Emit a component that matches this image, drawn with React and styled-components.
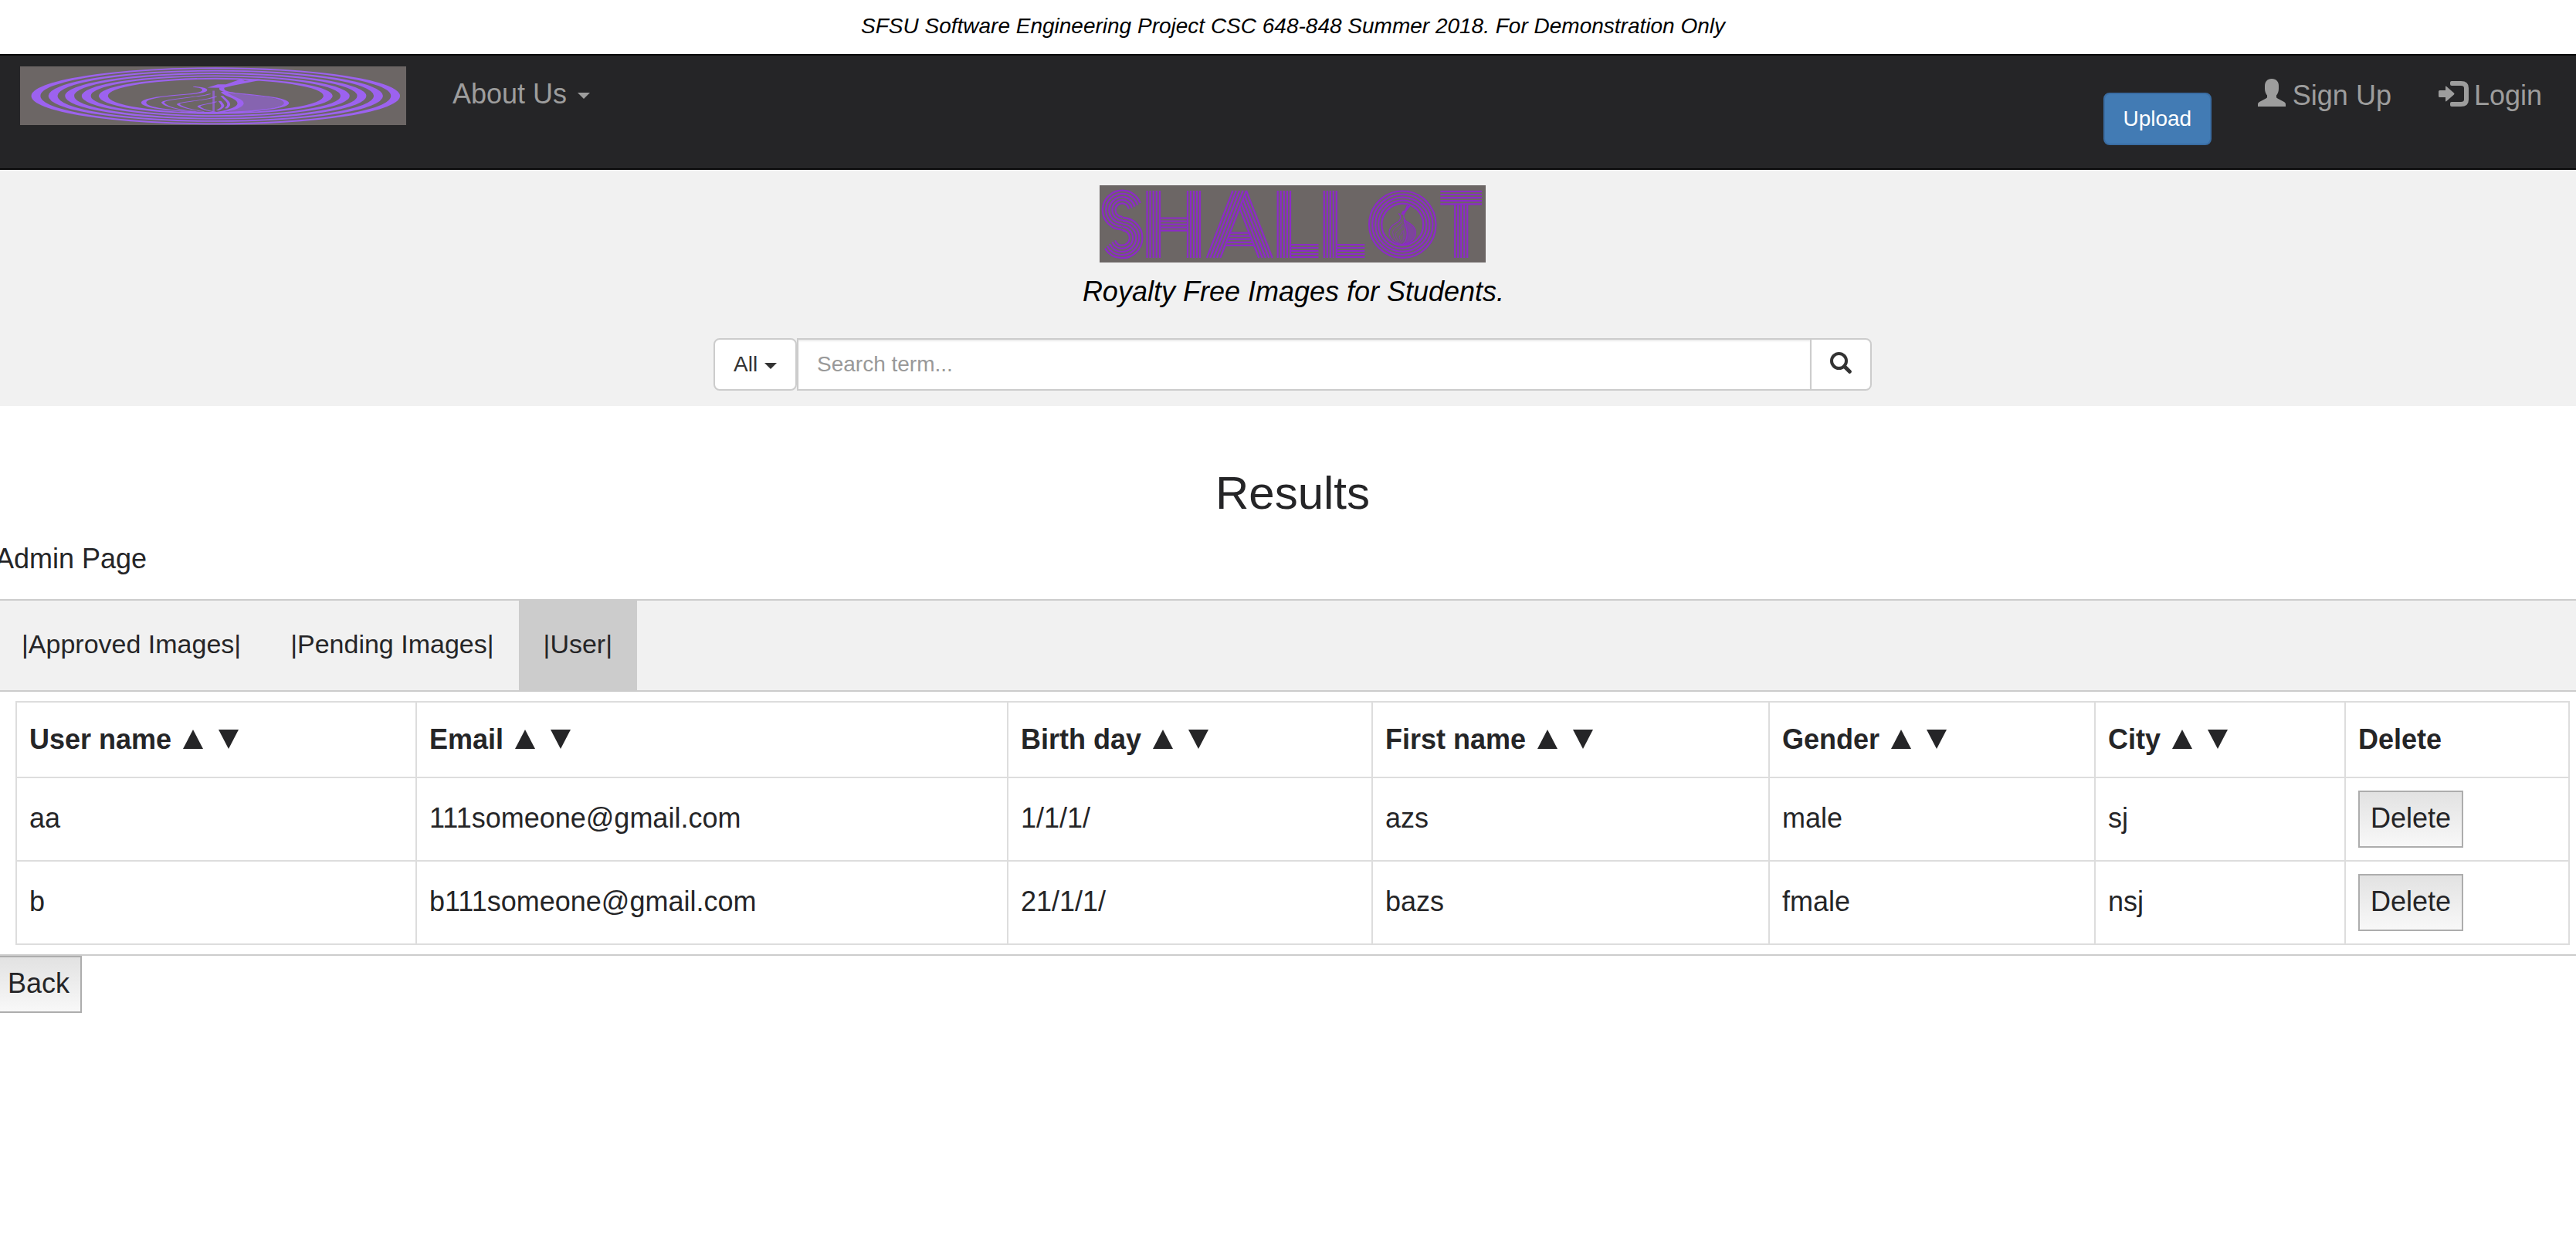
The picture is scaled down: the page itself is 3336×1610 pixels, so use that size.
import React from 'react';
import styled, { createGlobalStyle } from 'styled-components';

const GlobalStyle = createGlobalStyle`
  *, *::before, *::after { box-sizing: border-box; }
  html, body { margin: 0; padding: 0; }
  body {
    background: #fff;
    color: #252527;
    font-family: "Liberation Sans", Arial, Helvetica, sans-serif;
    font-size: 36px;
    overflow: hidden;
  }
`;

const Page = styled.div`
  width: 3336px;
  height: 1610px;
  overflow: hidden;
`;

const Canvas = styled.div`
  width: 3348px;
`;

const Notice = styled.div`
  height: 70px;
  line-height: 68px;
  padding-left: 1px;
  font-size: 28px;
  font-style: italic;
  text-align: center;
  color: #000;
`;

/* Navigation */
const Navbar = styled.nav`
  display: flex;
  align-items: flex-start;
  width: 3336px;
  height: 150px;
  padding: 14px 44px 0 26px;
  background: #252527;
  border: solid #070708;
  border-width: 2px 0;
  color: #9d9d9d;
`;

const Artwork = styled.svg`
  display: block;
  flex: none;
  background: #6c6665;
`;

const NavLink = styled.a`
  display: flex;
  align-items: center;
  height: 40px;
  line-height: 40px;
  margin-top: ${(p) => p.$top}px;
  margin-left: ${(p) => p.$left}px;
  white-space: pre;
`;

const Caret = styled.span`
  border: 8px solid transparent;
  border-top-color: currentColor;
  border-bottom: 0;
  margin-left: ${(p) => p.$gap}px;
  margin-top: 4px;
`;

const UploadButton = styled.button`
  width: 140px;
  height: 68px;
  margin: 34px 0 0 auto;
  padding: 0;
  border: 2px solid #3a6da3;
  border-radius: 8px;
  background: #427bb4;
  color: #fff;
  font: 28px "Liberation Sans", Arial, sans-serif;
`;

const NavIcon = styled.svg`
  display: block;
  flex: none;
  margin-right: ${(p) => p.$gap}px;
  margin-bottom: ${(p) => p.$lift}px;
`;

/* Hero */
const Hero = styled.header`
  display: flex;
  flex-direction: column;
  align-items: center;
  height: 306px;
  padding-top: 20px;
  background: #f1f1f1;
`;

const Tagline = styled.p`
  margin: 12px 0 35px;
  padding-left: 2px;
  height: 51px;
  line-height: 51px;
  font-style: italic;
  color: #000;
`;

const SearchGroup = styled.div`
  display: flex;
  width: 1500px;
  height: 68px;
  font-size: 28px;
  color: #333;
`;

const ScopeButton = styled.button`
  display: flex;
  align-items: center;
  width: 108px;
  padding: 0 0 0 24px;
  border: 2px solid #ccc;
  border-radius: 8px;
  background: #fff;
  color: inherit;
  font: 28px "Liberation Sans", Arial, sans-serif;
`;

const SearchInput = styled.input`
  flex: 1;
  min-width: 0;
  margin: 0;
  padding: 0 24px;
  border: 2px solid #ccc;
  border-radius: 0;
  background: #fff;
  box-shadow: inset 0 2px 2px rgba(0, 0, 0, 0.075);
  font: 28px "Liberation Sans", Arial, sans-serif;
  &::placeholder { color: #999; opacity: 1; }
`;

const SearchButton = styled.button`
  display: flex;
  align-items: center;
  justify-content: center;
  width: 78px;
  padding: 0 0 4px;
  border: 2px solid #ccc;
  border-left: 0;
  border-radius: 0 8px 8px 0;
  background: #fff;
`;

/* Results */
const Title = styled.h2`
  margin: 80px 0 26px;
  font-size: 60px;
  line-height: 66px;
  font-weight: 400;
  text-align: center;
`;

const Admin = styled.main`
  width: 3360px;
  margin-left: -6px;
`;

const AdminLabel = styled.div`
  height: 52px;
  line-height: 52px;
  margin-bottom: 26px;
`;

const TabBar = styled.div`
  display: flex;
  height: 120px;
  border: 2px solid #ccc;
  background: #f1f1f1;
`;

const Tab = styled.button`
  padding: 0 32px 3px;
  border: 0;
  background: ${(p) => (p.$active ? '#ccc' : 'transparent')};
  color: #252527;
  font: 34px "Liberation Sans", Arial, sans-serif;
  white-space: nowrap;
`;

const TabPanel = styled.section`
  padding: 12px 24px;
  border: 2px solid #ccc;
  border-top: 0;
`;

const Table = styled.table`
  width: 3308px;
  table-layout: fixed;
  border-collapse: collapse;
`;

const cell = `
  padding: 0 0 0 16px;
  border: 2px solid #ddd;
  text-align: left;
  vertical-align: middle;
  line-height: 52px;
  white-space: nowrap;
`;

const HeadCell = styled.th`
  ${cell}
  height: 98px;
  width: ${(p) => p.$width}px;
`;

const Cell = styled.td`
  ${cell}
  height: 108px;
`;

const CellText = styled.div`
  height: 54px;
`;

const SortArrow = styled.svg`
  margin: 0 5px 0 ${(p) => p.$left}px;
  vertical-align: baseline;
`;

const PlainButton = styled.button`
  display: block;
  height: 74px;
  padding: 0 14px 2px;
  border: 2px solid #adadad;
  border-radius: 0;
  background: linear-gradient(#e2e2e2, #f8f8f8);
  color: #252527;
  font: 36px "Liberation Sans", Arial, sans-serif;
`;

/* Five ruled stripes shared by every stroke of the brand artwork */
const RINGS = [43.2, 39.1, 35.1, 31.1, 27];

const OnionMark = () => (
  <g fill="none" stroke="currentColor" strokeLinecap="round">
    {RINGS.map((r) => <circle key={r} r={r} strokeWidth="2.2" />)}
    <path strokeWidth="1.2" d="M-4.8-14C-3-13-2.6-11-2.6-9C-2.8-5-5-3.5-8-2C-14 1-17.3 5-17.3 10C-17.3 17-12 24 0 25.8" />
    <path strokeWidth="1.2" d="M1.5-13C1.2-9 2-6.5 4.5-4.5C9-1.5 17 2 17 11C17 18 11 24.5 0 25.8" />
    <path fill="currentColor" stroke="none" fillOpacity=".55" d="M2.5-7C4 -4 16.5 1 16.5 11C16 19 9 25 2 26C5 21 7 14 5.8 8C5 2 2.5-1 2.5-7Z" />
    <path strokeWidth="1.5" d="M2-6C2.5 0 6 4 6 11C6 17 4 22 1 25" />
    <path strokeWidth=".7" d="M-1.5-3C-4 2-13 5-12.7 10.5C-12 17-9 21-5 24" />
    <path strokeWidth=".7" d="M0 1C-2 7-9 9-9 13C-8 18-6 21-3 24" />
    <path strokeWidth=".7" d="M0 9C-1 12-4.5 14-4 17C-3 21-2 23 0 25" />
    <path strokeWidth=".7" d="M1.5 0C2.5 7 4 12 2.5 19M1 8C1.5 13 2.5 16 .5 22" />
    <path strokeWidth=".5" strokeOpacity=".7" d="M-.5-8V24" />
    <path fill="currentColor" stroke="none" d="M-2-13L.5-18L2.500-18L6-26L7-23.500L10-26L11.500-25.500L4-16L2-12.500Z" />
    <path fill="currentColor" stroke="none" d="M-9 23.5C-4 26 5 26 11 22.5C6 29-5 29-9 23.5Z" />
  </g>
);

const SLOPE = 0.387;
const S_STRIPES = [[8.7, 26.2], [12.8, 22.1], [16.9, 18], [21.1, 13.9], [25.3, 9.7]];

const columns = (xs, y1, y2) => xs.map((x) => <line key={`c${x}`} x1={x} x2={x} y1={y1} y2={y2} />);
const rules = (ys, x1, x2) => ys.map((y) => <line key={`r${y}`} x1={x1} x2={x2} y1={y} y2={y} />);

const BrandBanner = () => (
  <Artwork width="500" height="100" viewBox="0 0 500 100" color="#8c2ac8" role="img" aria-label="Shallot">
    <g fill="none" stroke="currentColor" strokeWidth="2.2">
      {S_STRIPES.map(([upper, lower], i) => (
        <React.Fragment key={upper}>
          <circle cx="29.2" cy="32" r={upper} pathLength="360" strokeDasharray={`${259 - i * 3} 360`} transform="rotate(92 29.2 32)" />
          <circle cx="29.2" cy="68" r={lower} pathLength="360" strokeDasharray={`${236 + i * 3} 360`} transform="rotate(-88 29.2 68)" />
          <line x1={28.7} y1={32 + upper} x2={29.7} y2={68 - lower} />
        </React.Fragment>
      ))}
      {columns([61.5, 65.5, 69.7, 73.8, 78], 7, 94)}
      {columns([114, 118, 122, 126, 130], 7, 94)}
      {rules([42.5, 46.5, 50.6, 54.7, 58.7], 78, 114)}
      {[138.9, 143.2, 147.6, 152, 156.3].map((x) => (
        <line key={x} x1={x} y1="94" x2={x + 87 * SLOPE} y2="7" />
      ))}
      {[206.3, 210.7, 215, 219.3, 223.7].map((x) => {
        const y = 94 - (x - 156.3) / (2 * SLOPE);
        return <line key={x} x1={x} y1="94" x2={x - SLOPE * (94 - y)} y2={y} />;
      })}
      {[61.7, 65.7, 69.7, 73.8, 77.8].map((y) => (
        <line key={y} x1={156.3 + SLOPE * (94 - y)} x2={206.3 - SLOPE * (94 - y)} y1={y} y2={y} />
      ))}
      {columns([230.7, 234.7, 238.8, 242.9, 247], 7, 94)}
      {rules([77, 81, 85, 89, 93], 247, 283.5)}
      {columns([290.8, 294.8, 298.8, 302.8, 306.8], 7, 94)}
      {rules([77.01, 81.01, 85.01, 89.01, 93.01], 306.8, 343.3)}
      {rules([8, 12, 16.1, 20.2, 24.3], 441.3, 495)}
      {columns([460.2, 464.2, 468.2, 472.2, 476.2], 24, 94)}
    </g>
    <g transform="translate(392.3 50.7)"><OnionMark /></g>
  </Artwork>
);

const NavLogo = () => (
  <Artwork width="500" height="76" viewBox="0 0 500 76" color="#9c62ef" role="img" aria-label="Shallot home">
    <g transform="translate(253.3 38.3) scale(5.39 .835)"><OnionMark /></g>
  </Artwork>
);

const UserIcon = () => (
  <NavIcon width="36" height="36" viewBox="0 0 36 36" fill="currentColor" $gap={9} $lift={8}>
    <path d="M18 0C12 0 9 4 9 9v4c0 4 1.5 6.500 3 8.500v2c0 1-.5 1.500-1.500 2L2 30C.5 31 0 31.800 0 33v3h36v-3c0-1.200-.5-2-2-3l-8.500-4.500c-1-.5-1.500-1-1.500-2v-2c1.500-2 3-4.500 3-8.500V9c0-5-3-9-9-9z" />
  </NavIcon>
);

const LoginIcon = () => (
  <NavIcon width="39" height="33" viewBox="0 0 39 33" $gap={7} $lift={5}>
    <path d="M1.500 12H9V7.500Q9 6 10.300 7L20 15.500Q21 16.500 20 17.500L10.300 26Q9 27 9 25.500V21H1.500Q0 21 0 19.500V13.500Q0 12 1.500 12z" fill="currentColor" />
    <path d="M17 3H29Q36 3 36 9V24Q36 30 29 30H17" fill="none" stroke="currentColor" strokeWidth="6" />
    <path d="M17 0Q15 0 15 2V4Q15 6 17 6zM17 27Q15 27 15 29V31Q15 33 17 33z" fill="currentColor" />
  </NavIcon>
);

const SearchIcon = () => (
  <svg width="28" height="28" viewBox="0 0 28 28" fill="none" stroke="#333">
    <circle cx="11.500" cy="11.500" r="9.500" strokeWidth="4" />
    <path d="M18.500 18.500L25.300 25.300" strokeWidth="5" strokeLinecap="round" />
  </svg>
);

const SortArrows = () => (
  <>
    <SortArrow $left={15} width="26" height="25" viewBox="0 0 26 25"><path d="M0 25L13 0L26 25z" fill="#252527" /></SortArrow>
    <SortArrow $left={15} width="26" height="25" viewBox="0 0 26 25"><path d="M0 0H26L13 25z" fill="#252527" /></SortArrow>
  </>
);

const HEADERS = [
  ['User name', 518], ['Email', 766], ['Birth day', 472], ['First name', 514],
  ['Gender', 422], ['City', 324], ['Delete', 290],
];

const USERS = [
  ['aa', '111someone@gmail.com', '1/1/1/', 'azs', 'male', 'sj'],
  ['b', 'b111someone@gmail.com', '21/1/1/', 'bazs', 'fmale', 'nsj'],
];

const TABS = ['|Approved Images|', '|Pending Images|', '|User|'];

export default function App() {
  return (
    <Page>
      <GlobalStyle />
      <Canvas>
        <Notice>SFSU Software Engineering Project CSC 648-848 Summer 2018. For Demonstration Only</Notice>
        <Navbar>
          <NavLogo />
          <NavLink $top={16} $left={60}>About Us<Caret $gap={14} /></NavLink>
          <UploadButton>Upload</UploadButton>
          <NavLink $top={18} $left={60}><UserIcon />Sign Up</NavLink>
          <NavLink $top={18} $left={61}><LoginIcon />Login</NavLink>
        </Navbar>
        <Hero>
          <BrandBanner />
          <Tagline>Royalty Free Images for Students.</Tagline>
          <SearchGroup>
            <ScopeButton>All<Caret $gap={9} /></ScopeButton>
            <SearchInput placeholder="Search term..." />
            <SearchButton aria-label="Search"><SearchIcon /></SearchButton>
          </SearchGroup>
        </Hero>
        <Title>Results</Title>
        <Admin>
          <AdminLabel>Admin Page</AdminLabel>
          <TabBar>
            {TABS.map((name) => <Tab key={name} $active={name === '|User|'}>{name}</Tab>)}
          </TabBar>
          <TabPanel>
            <Table>
              <thead>
                <tr>
                  {HEADERS.map(([name, width]) => (
                    <HeadCell key={name} $width={width}>
                      {name}{name !== 'Delete' && <SortArrows />}
                    </HeadCell>
                  ))}
                </tr>
              </thead>
              <tbody>
                {USERS.map((user) => (
                  <tr key={user[0]}>
                    {user.map((value, i) => <Cell key={i}><CellText>{value}</CellText></Cell>)}
                    <Cell><PlainButton>Delete</PlainButton></Cell>
                  </tr>
                ))}
              </tbody>
            </Table>
          </TabPanel>
          <PlainButton>Back</PlainButton>
        </Admin>
      </Canvas>
    </Page>
  );
}
